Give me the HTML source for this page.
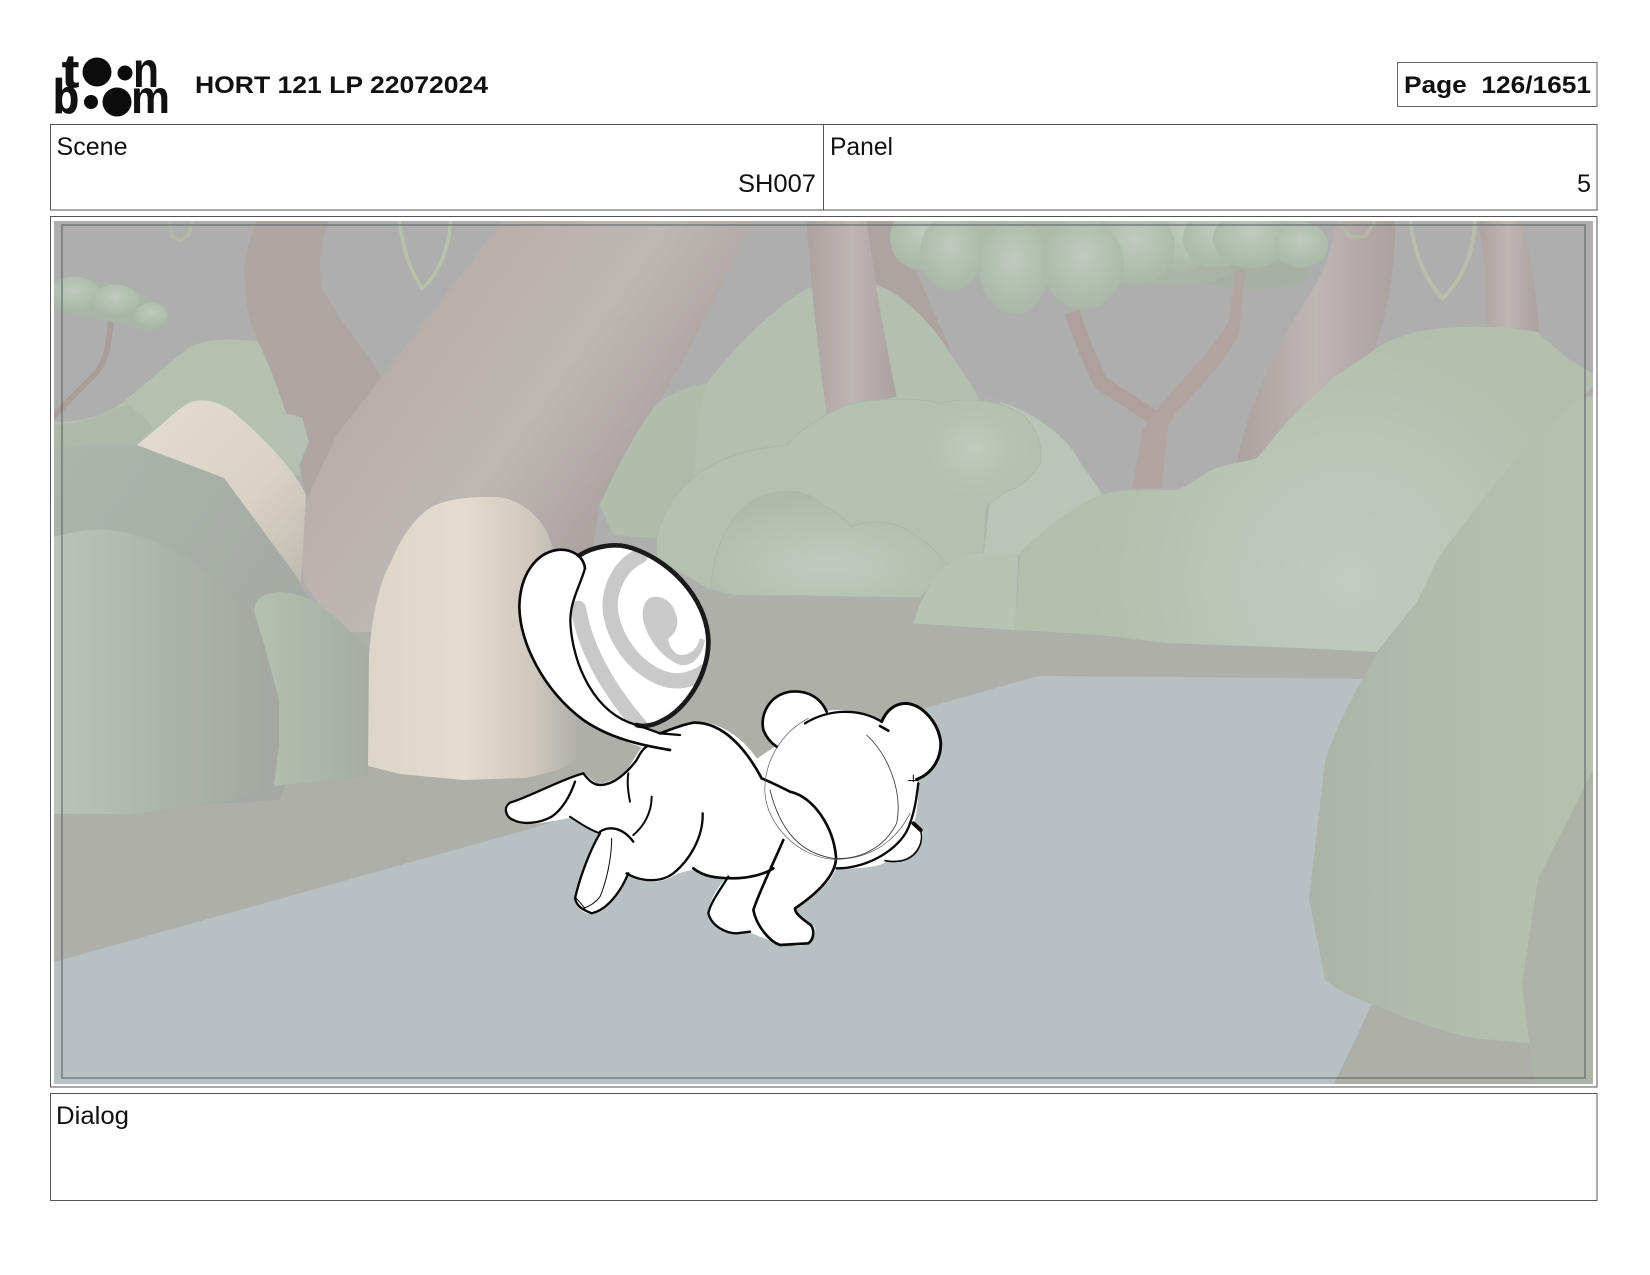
<!DOCTYPE html>
<html><head><meta charset="utf-8"><title>HORT 121 LP 22072024</title>
<style>html,body{margin:0;padding:0;background:#fff}svg{display:block}text{font-family:"Liberation Sans",sans-serif;fill:#111}</style></head>
<body>
<svg width="1650" height="1275" viewBox="0 0 1650 1275" xmlns="http://www.w3.org/2000/svg">
<defs>
<clipPath id="img"><rect x="54" y="221" width="1539" height="863"/></clipPath>
<linearGradient id="trunk" gradientUnits="userSpaceOnUse" x1="422" y1="301" x2="698" y2="499"><stop offset="0" stop-color="#b8aeaa"/><stop offset=".45" stop-color="#bdb8b4"/><stop offset=".8" stop-color="#ada4a2"/><stop offset="1" stop-color="#a8a09e"/></linearGradient>
<linearGradient id="tv" x1="0" x2="1" y1="0" y2="0"><stop offset="0" stop-color="#aca2a0"/><stop offset=".5" stop-color="#bdb6b3"/><stop offset="1" stop-color="#aba1a0"/></linearGradient>
<linearGradient id="cream" gradientUnits="userSpaceOnUse" x1="368" x2="580" y1="0" y2="0"><stop offset="0" stop-color="#dcd5c9"/><stop offset=".45" stop-color="#e3dccf"/><stop offset=".78" stop-color="#cfc8bd"/><stop offset="1" stop-color="#aeaeaa"/></linearGradient>
<linearGradient id="cream2" x1="0" x2="1" y1="0" y2="1"><stop offset="0" stop-color="#e3dccf"/><stop offset=".6" stop-color="#d9d2c6"/><stop offset="1" stop-color="#bfbbb1"/></linearGradient>
<linearGradient id="bushL" gradientUnits="userSpaceOnUse" x1="54" x2="290" y1="0" y2="0"><stop offset="0" stop-color="#b9c5ba"/><stop offset=".5" stop-color="#abb3a9"/><stop offset="1" stop-color="#a3a6a0"/></linearGradient>
<linearGradient id="bushO" gradientUnits="userSpaceOnUse" x1="54" x2="320" y1="440" y2="620"><stop offset="0" stop-color="#abb6ac"/><stop offset="1" stop-color="#a5a9a3"/></linearGradient>
<linearGradient id="bushS" gradientUnits="userSpaceOnUse" x1="260" x2="370" y1="0" y2="0"><stop offset="0" stop-color="#b3c0af"/><stop offset="1" stop-color="#a6aca3"/></linearGradient>
<radialGradient id="mound" gradientUnits="userSpaceOnUse" cx="1350" cy="580" r="260"><stop offset="0" stop-color="#c0ccc0"/><stop offset="1" stop-color="#b3bfac"/></radialGradient>
<radialGradient id="leaf" cx=".5" cy=".4" r=".6"><stop offset="0" stop-color="#bfcbbd"/><stop offset="1" stop-color="#a9b8a7"/></radialGradient>
<radialGradient id="lobe" cx=".5" cy=".7" r=".65"><stop offset="0" stop-color="#bfcbbd"/><stop offset="1" stop-color="#afbbaa"/></radialGradient>
<radialGradient id="bump" cx=".5" cy=".5" r=".5"><stop offset="0" stop-color="#bfcbbd"/><stop offset="1" stop-color="#b5c1af" stop-opacity="0"/></radialGradient>
<linearGradient id="front" gradientUnits="userSpaceOnUse" x1="1310" x2="1560" y1="0" y2="0"><stop offset="0" stop-color="#acb3a8"/><stop offset=".5" stop-color="#b2bcad"/><stop offset="1" stop-color="#b5c0af"/></linearGradient>
<clipPath id="ball"><path d="M300,75 C340,50 400,40 440,50 C560,80 680,200 685,330 C688,430 620,540 540,575 C490,595 430,585 400,560 C330,500 280,400 272,290 C265,220 300,170 315,115 Z"/></clipPath>
</defs>

<rect width="1650" height="1275" fill="#fff"/>

<!-- header -->
<g fill="#0c0c0c">
<text x="62" y="87" font-size="46" font-weight="700" textLength="17" lengthAdjust="spacingAndGlyphs" stroke="#0c0c0c" stroke-width=".8">t</text>
<circle cx="97" cy="72" r="14.5"/>
<circle cx="125" cy="73" r="7.5"/>
<text x="133" y="87" font-size="50" font-weight="700" textLength="26" lengthAdjust="spacingAndGlyphs">n</text>
<text x="53" y="113" font-size="48" font-weight="700" textLength="26" lengthAdjust="spacingAndGlyphs" stroke="#0c0c0c" stroke-width=".8">b</text>
<circle cx="91" cy="102" r="7"/>
<circle cx="117" cy="102" r="14.5"/>
<text x="131" y="113" font-size="46" font-weight="700" textLength="39" lengthAdjust="spacingAndGlyphs">m</text>
</g>
<text x="195" y="93" font-size="24" font-weight="700" textLength="293" lengthAdjust="spacingAndGlyphs">HORT 121 LP 22072024</text>
<rect x="1397.5" y="62.5" width="199.5" height="44" fill="#fff" stroke="#666" stroke-width="1"/>
<text x="1404" y="93" font-size="24" font-weight="700" textLength="187" lengthAdjust="spacingAndGlyphs">Page&#160;&#160;126/1651</text>

<!-- info boxes -->
<rect x="50.5" y="124.5" width="1546.5" height="85.5" fill="#fff" stroke="#555" stroke-width="1"/>
<line x1="823.5" y1="124" x2="823.5" y2="210" stroke="#555"/>
<text x="56.5" y="155" font-size="25" textLength="71" lengthAdjust="spacingAndGlyphs">Scene</text>
<text x="738" y="192" font-size="25" textLength="78" lengthAdjust="spacingAndGlyphs">SH007</text>
<text x="830" y="155" font-size="25" textLength="63" lengthAdjust="spacingAndGlyphs">Panel</text>
<text x="1577" y="192" font-size="25" textLength="14" lengthAdjust="spacingAndGlyphs">5</text>

<rect x="50.5" y="216.5" width="1546.5" height="870.5" fill="#fff" stroke="#555" stroke-width="1"/>

<!-- scene -->
<g clip-path="url(#img)">
<rect x="54" y="221" width="1539" height="863" fill="#aeaeae"/>

<!-- far right trunks + vines -->
<g transform="translate(1100,215) scale(.33333)">
<path d="M410,745 C440,600 500,430 640,220 C680,160 700,80 710,10 L885,10 C890,130 860,330 810,430 L480,735 Z" fill="url(#tv)"/>
<path d="M1130,10 L1260,10 C1290,100 1310,250 1318,350 L1160,340 C1165,200 1150,100 1130,10Z" fill="url(#tv)"/>
<path d="M930,10 C940,100 970,190 1028,250 C1090,190 1125,100 1125,10" fill="none" stroke="#b8bea9" stroke-width="12"/>
<path d="M710,10 L750,65 L795,65 L830,10" fill="none" stroke="#b4b8a6" stroke-width="10"/>
</g>

<!-- mid back trunk & mound -->
<g transform="translate(600,215) scale(.33333)">
<path d="M800,10 L880,10 C960,200 1020,330 1050,400 L1000,560 L860,540 Z" fill="#ada3a1"/>
</g>

<!-- left mound + left trunk -->
<g transform="translate(54,215) scale(.33333)">
<path d="M0,690 L0,620 C40,620 100,620 180,580 C240,540 300,480 400,400 C450,370 540,370 610,380 L700,540 L740,780 L400,800 Z" fill="#b4c1af"/>
<path d="M0,700 L0,630 L60,625 C120,610 180,580 225,570 C250,590 280,610 295,640 L250,690 Z" fill="#adb9a9"/>
<path d="M610,10 L825,10 C800,90 790,150 805,220 C850,310 930,400 985,490 L760,850 L740,770 C720,640 660,480 600,350 C570,280 565,150 580,100 Z" fill="#afa5a3"/>
<path d="M630,640 C650,600 700,585 745,610 L765,680 L730,765 Z" fill="#b4c1b2"/>
<path d="M1035,10 C1050,120 1070,170 1105,220 C1150,180 1185,110 1190,10" fill="none" stroke="#b9c0aa" stroke-width="11"/>
<path d="M345,10 L355,65 L380,75 L405,60 L415,10" fill="none" stroke="#b4b9a6" stroke-width="10"/>
<path d="M170,320 C165,380 160,440 120,480 C80,520 30,570 -10,615" fill="none" stroke="#a99e9b" stroke-width="17"/>
<path d="M0,205 C60,180 120,190 180,212 C250,225 340,265 342,310 C330,355 260,355 200,325 C130,315 50,295 0,285Z" fill="#a9b5a6"/>
<ellipse cx="60" cy="235" rx="78" ry="50" fill="url(#leaf)"/>
<ellipse cx="185" cy="255" rx="70" ry="46" fill="url(#leaf)"/>
<ellipse cx="292" cy="300" rx="50" ry="36" fill="url(#leaf)"/>
</g>

<!-- big trunk -->
<path d="M507,215 L758,215 L707,315 L660,402 L600,502 L578,640 L337,632 L304,582 L298,532 C300,515 310,490 337,435 L381,378 Z" fill="url(#trunk)"/>

<!-- ground -->
<path d="M54,1084 L54,640 L345,632 L380,632 L580,590 L1593,590 L1593,1084Z" fill="#aeafa9"/>

<!-- water -->
<path d="M54,962 L526,830 L922,709 L1038,676 L1390,679 L1390,1004 L1372,1004 L1334,1084 L54,1084Z" fill="#b7c1c3"/>

<!-- mid cluster -->
<g transform="translate(600,215) scale(.33333)">
<path d="M0,870 C50,760 120,620 180,560 C220,530 280,510 320,505 C400,400 520,280 620,220 L830,210 C900,230 1000,330 1040,400 C1070,450 1120,510 1140,560 L1200,800 L180,970 L40,960 Z" fill="#b4c0af"/>
<path d="M0,870 C50,760 120,620 180,560 C220,530 280,510 320,505 C300,570 285,660 285,780 L170,970 L40,960 Z" fill="#b0bdab"/>
<path d="M620,10 L800,10 C820,180 860,400 890,545 L680,600 C660,450 630,200 620,10Z" fill="url(#tv)"/>
<path d="M1200,560 C1300,590 1400,660 1440,740 C1480,800 1500,820 1520,860 L1500,1020 L1150,1020Z" fill="#b9c5b6" stroke="#adb7a9" stroke-width="3"/>
<path d="M170,970 C190,870 240,810 320,760 C400,710 480,700 560,690 C610,630 680,600 740,570 C820,550 950,545 1020,565 C1100,545 1200,555 1270,600 C1310,640 1330,690 1320,750 C1290,790 1260,820 1220,830 L1160,870 L1150,1020 L1040,1060 L950,1148 L330,1125 L170,1030 Z" fill="#b5c1b0" stroke="#adb7a9" stroke-width="3"/>
<ellipse cx="1120" cy="700" rx="200" ry="170" fill="url(#bump)"/>
<path d="M330,1120 C345,1000 380,900 470,850 C540,820 620,820 670,870 C710,890 740,920 755,935 C800,915 880,915 930,950 C980,980 1020,1020 1045,1055 L960,1148 L400,1140 Z" fill="url(#lobe)" stroke="#adb7a9" stroke-width="3"/>
<path d="M940,1225 C970,1130 1010,1060 1090,1025 C1150,1010 1220,1015 1255,1020 L1245,1245 Z" fill="#b7c4b4"/>
</g>

<!-- canopy -->
<ellipse cx="1110" cy="232" rx="205" ry="28" fill="#aebbaa"/>
<ellipse cx="1251" cy="273" rx="58" ry="16" fill="#a7b1a3"/>
<ellipse cx="1175" cy="270" rx="55" ry="15" fill="#aab4a6"/>
<ellipse cx="922" cy="238" rx="32" ry="32" fill="url(#leaf)"/>
<ellipse cx="1183" cy="238" rx="28" ry="34" fill="url(#leaf)"/>
<ellipse cx="1135" cy="247" rx="40" ry="38" fill="url(#leaf)"/>
<ellipse cx="1215" cy="238" rx="32" ry="30" fill="url(#leaf)"/>
<ellipse cx="1251" cy="239" rx="38" ry="29" fill="url(#leaf)"/>
<ellipse cx="1301" cy="245" rx="27" ry="23" fill="url(#leaf)"/>
<ellipse cx="951" cy="253" rx="31" ry="38" fill="url(#leaf)"/>
<ellipse cx="1014" cy="268" rx="35" ry="46" fill="url(#leaf)"/>
<ellipse cx="1083" cy="264" rx="41" ry="45" fill="url(#leaf)"/>

<!-- Y tree branches -->
<path d="M1158,420 L1100,382 L1086,350 L1072,312" fill="none" stroke="#ada09d" stroke-width="15"/>
<g transform="translate(1100,215) scale(.33333)">
<path d="M408,165 L435,165 L420,330 L412,370 C370,440 310,510 230,590 L205,630 L185,820 L95,820 L130,640 L180,570 C260,480 340,400 385,320 Z" fill="#b2a4a1"/>
</g>

<!-- big right mound -->
<path d="M1015,630 L1020,552 C1050,525 1075,505 1100,495 C1125,488 1150,490 1177,490 C1195,482 1205,472 1217,468 C1235,462 1245,462 1257,458 L1287,422 L1333,378 L1367,355 C1380,345 1390,340 1400,337 C1420,330 1440,328 1460,327 C1490,326 1515,328 1537,332 L1567,358 L1600,378 L1583,397 L1530,442 L1500,478 L1440,555 L1417,602 L1377,652 L1300,648 L1167,643 L1100,635 Z" fill="url(#mound)"/>

<!-- right front bushes -->
<path d="M1600,395 L1583,397 L1530,442 L1500,478 L1440,555 L1417,602 L1378,652 C1350,700 1335,730 1325,761 L1309,899 L1325,980 C1345,995 1360,1000 1372,1004 C1410,1020 1450,1035 1483,1039 L1528,1043 L1600,1043 Z" fill="url(#front)"/>
<path d="M1600,770 L1593,770 L1538,879 L1522,984 L1535,1090 L1600,1090Z" fill="#aeb3a8"/>

<!-- left dark bushes -->
<path d="M54,450 C74,445 107,442 137,445 C167,448 194,462 224,478 C246,500 266,530 284,555 L304,592 L340,640 L280,800 L54,814 Z" fill="url(#bushO)"/>
<path d="M137,445 C154,432 174,412 187,404 C200,397 220,400 237,415 C260,435 294,468 306,495 L301,582 L224,478 Z" fill="url(#cream2)"/>
<path d="M54,537 C80,530 100,527 121,532 C150,537 170,546 187,558 C205,570 220,583 231,595 L254,612 L263,640 L279,700 L279,745 L272,786 L237,800 L131,814 L54,814 Z" fill="url(#bushL)"/>
<path d="M254,612 C254,600 262,593 281,592 C295,593 305,597 314,602 C330,610 350,630 369,652 L368,776 L274,786 L279,745 L279,700 L263,640 Z" fill="url(#bushS)"/>

<!-- cream front -->
<path d="M369,655 C372,615 380,580 391,562 C400,540 412,520 430,508 C445,499 470,496 497,497 C520,499 538,515 547,532 L572,600 L578,700 L576,761 L558,770 L526,778 L463,780 L400,774 L368,766 Z" fill="url(#cream)"/>
</g>

<rect x="62" y="225" width="1523" height="853" fill="none" stroke="#5f6664" stroke-opacity=".7" stroke-width="1.6"/>

<!-- character -->
<g transform="translate(480,530) scale(.33333)" stroke-linecap="round" stroke-linejoin="round">
<!-- white silhouette -->
<path d="M315,115 C310,75 270,55 230,60 C170,70 120,130 118,230 C120,340 190,480 310,570 C360,605 430,630 490,650 C460,690 450,720 430,735 C400,755 360,770 345,762 L310,730 C260,745 150,800 85,820 C70,835 80,860 100,870 C130,885 180,880 270,860 C300,880 330,900 360,910 C330,960 300,1040 285,1110 C300,1140 320,1150 340,1150 C380,1140 420,1090 445,1030 C480,1055 530,1060 570,1040 C600,1020 630,1020 640,1015 C670,1040 710,1045 740,1045 C710,1080 690,1120 685,1150 C700,1190 750,1215 810,1205 C830,1210 880,1240 950,1245 C990,1245 1010,1215 1000,1190 C970,1170 945,1150 945,1135 C1020,1085 1060,1040 1065,1012 C1120,1015 1200,1010 1220,990 C1260,1000 1310,985 1325,930 C1330,910 1320,890 1300,880 C1310,830 1315,780 1310,750 C1360,730 1385,670 1382,635 C1370,570 1320,520 1270,520 C1240,525 1215,550 1205,575 C1150,545 1090,540 1040,545 C1020,500 980,480 930,485 C870,495 840,550 850,600 C860,620 880,640 890,650 L830,690 C790,630 720,575 640,578 C610,580 570,600 540,610 L480,590 C420,570 340,500 300,420 C270,350 265,290 272,250 C280,200 305,160 315,115 Z" fill="#fff" stroke="#fff" stroke-width="6"/>
<path d="M300,75 C340,50 400,40 440,50 C560,80 680,200 685,330 C688,430 620,540 540,575 C490,595 430,585 400,560 C330,500 280,400 272,290 C265,220 300,170 315,115 Z" fill="#fff"/>
<g clip-path="url(#ball)" fill="none" stroke="#c9c9c9">
<path d="M480,78 C420,105 382,180 392,250 C408,340 470,412 540,442 C590,462 630,452 675,425" stroke-width="46"/>
<path d="M295,235 C312,335 365,455 482,590" stroke-width="46"/>
<path d="M525,200 C490,200 480,250 495,290 C510,330 540,380 600,405 C640,410 665,380 675,330 L660,325 C650,360 630,375 600,375 C580,370 565,345 565,325 C590,310 600,280 585,245 C575,215 550,200 525,200 Z" fill="#c9c9c9" stroke="none"/>
</g>
<g fill="none" stroke="#0a0a0a">
<path d="M300,75 C340,50 400,40 440,50 C560,80 680,200 685,330 C688,430 620,540 540,575 C520,585 490,592 470,585" stroke="#1a1a1a" stroke-width="14"/>
<path d="M315,115 C310,75 270,55 230,60 C170,70 120,130 118,230 C120,340 190,480 310,570 C390,625 480,645 570,660" stroke-width="8"/>
<path d="M315,115 C300,170 265,220 272,290 C280,400 340,550 470,585 L540,610 L600,615" stroke-width="7"/>
<path d="M310,730 C250,745 150,800 90,818 C70,830 75,860 100,870 C130,885 180,880 215,860 C245,840 270,800 285,755" stroke-width="7"/>
<path d="M310,730 C325,750 340,765 360,765 C400,765 440,730 470,690 C480,670 490,655 500,650" stroke-width="7"/>
<path d="M445,730 C440,760 445,790 450,815" stroke-width="6"/>
<path d="M515,800 C515,850 490,890 460,915" stroke-width="6"/>
<path d="M270,860 C300,880 330,900 360,910" stroke-width="6"/>
<path d="M360,905 C390,885 430,895 460,935" stroke-width="7"/>
<path d="M360,910 C330,960 300,1040 285,1105 C290,1130 310,1140 335,1150 C380,1140 420,1090 445,1030" stroke-width="7"/>
<path d="M395,925 C395,970 385,1040 360,1100 C345,1120 325,1130 310,1135 M285,1100 L315,1135" stroke-width="3"/>
<path d="M440,1030 C480,1055 540,1060 580,1030 C630,990 670,920 668,850" stroke-width="7"/>
<path d="M640,1015 C670,1040 710,1045 760,1045 C800,1045 850,1035 880,1015" stroke-width="8"/>
<path d="M745,1040 C720,1080 690,1120 685,1150 C695,1190 740,1210 770,1210 L810,1205" stroke-width="7"/>
<path d="M910,930 C880,1000 840,1080 820,1140 C830,1190 870,1235 900,1245 L985,1240 C1005,1225 1005,1190 985,1180 C965,1165 945,1150 945,1135 C1020,1085 1070,1030 1068,980 C1060,890 1000,800 930,785 C900,770 870,755 845,745 C800,660 730,575 640,578 C610,582 570,600 540,610" stroke-width="8"/>
<path d="M975,580 C1040,540 1130,530 1205,575" stroke-width="7"/>
<path d="M985,565 C900,610 850,700 855,790 C860,880 950,980 1060,988 C1150,990 1240,950 1290,850" stroke="#555" stroke-width="2"/>
<path d="M870,780 C900,900 960,970 1060,985 C1130,990 1210,960 1250,880 C1270,780 1220,670 1160,615" stroke="#333" stroke-width="2.5"/>
<path d="M1040,545 C1020,500 980,480 930,485 C870,495 840,550 850,600 C860,625 875,640 890,650" stroke-width="8"/>
<path d="M1205,575 C1220,540 1245,520 1280,520 C1330,525 1375,580 1382,635 C1385,680 1360,730 1310,748" stroke-width="9"/>
<path d="M1225,602 L1200,588" stroke-width="8"/>
<path d="M1300,735 L1300,755 M1285,752 L1315,752" stroke-width="3"/>
<path d="M1315,760 C1310,800 1305,840 1290,880 C1270,950 1170,1015 1070,1015" stroke-width="7"/>
<path d="M1300,880 C1320,890 1330,910 1322,940 C1305,990 1260,1000 1215,992" stroke-width="5"/>
<path d="M1300,880 L1322,900" stroke-width="12"/>
</g>
</g>

<!-- dialog -->
<rect x="50.5" y="1093.5" width="1546.5" height="107" fill="#fff" stroke="#555" stroke-width="1"/>
<text x="56" y="1124" font-size="25" textLength="73" lengthAdjust="spacingAndGlyphs">Dialog</text>
</svg>
</body></html>
